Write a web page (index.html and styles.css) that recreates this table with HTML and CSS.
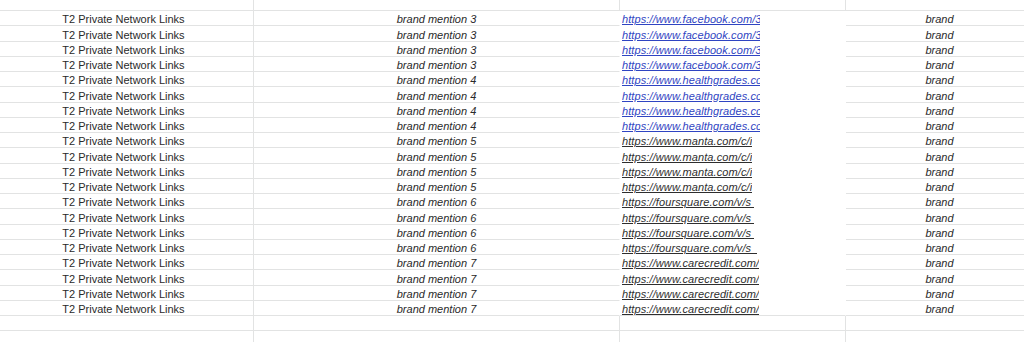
FILE: index.html
```html
<!DOCTYPE html>
<html>
<head>
<meta charset="utf-8">
<link rel="stylesheet" href="styles.css">
</head>
<body>
<div class="sheet">
  <div class="row top"><div class="c c1"></div><div class="c c2"></div><div class="c c3"></div><div class="c c4"></div></div>

  <div class="row data"><div class="c c1">T2 Private Network Links</div><div class="c c2">brand mention 3</div><div class="c c3"><span class="link blue">https://www.facebook.com/3</span></div><div class="c c4">brand</div></div>
  <div class="row data"><div class="c c1">T2 Private Network Links</div><div class="c c2">brand mention 3</div><div class="c c3"><span class="link blue">https://www.facebook.com/3</span></div><div class="c c4">brand</div></div>
  <div class="row data"><div class="c c1">T2 Private Network Links</div><div class="c c2">brand mention 3</div><div class="c c3"><span class="link blue">https://www.facebook.com/3</span></div><div class="c c4">brand</div></div>
  <div class="row data"><div class="c c1">T2 Private Network Links</div><div class="c c2">brand mention 3</div><div class="c c3"><span class="link blue">https://www.facebook.com/3</span></div><div class="c c4">brand</div></div>

  <div class="row data"><div class="c c1">T2 Private Network Links</div><div class="c c2">brand mention 4</div><div class="c c3"><span class="link blue">https://www.healthgrades.co</span></div><div class="c c4">brand</div></div>
  <div class="row data"><div class="c c1">T2 Private Network Links</div><div class="c c2">brand mention 4</div><div class="c c3"><span class="link blue">https://www.healthgrades.co</span></div><div class="c c4">brand</div></div>
  <div class="row data"><div class="c c1">T2 Private Network Links</div><div class="c c2">brand mention 4</div><div class="c c3"><span class="link blue">https://www.healthgrades.co</span></div><div class="c c4">brand</div></div>
  <div class="row data"><div class="c c1">T2 Private Network Links</div><div class="c c2">brand mention 4</div><div class="c c3"><span class="link blue">https://www.healthgrades.co</span></div><div class="c c4">brand</div></div>

  <div class="row data"><div class="c c1">T2 Private Network Links</div><div class="c c2">brand mention 5</div><div class="c c3"><span class="link">https://www.manta.com/c/i</span></div><div class="c c4">brand</div></div>
  <div class="row data"><div class="c c1">T2 Private Network Links</div><div class="c c2">brand mention 5</div><div class="c c3"><span class="link">https://www.manta.com/c/i</span></div><div class="c c4">brand</div></div>
  <div class="row data"><div class="c c1">T2 Private Network Links</div><div class="c c2">brand mention 5</div><div class="c c3"><span class="link">https://www.manta.com/c/i</span></div><div class="c c4">brand</div></div>
  <div class="row data"><div class="c c1">T2 Private Network Links</div><div class="c c2">brand mention 5</div><div class="c c3"><span class="link">https://www.manta.com/c/i</span></div><div class="c c4">brand</div></div>

  <div class="row data"><div class="c c1">T2 Private Network Links</div><div class="c c2">brand mention 6</div><div class="c c3"><span class="link">https://foursquare.com/v/s </span></div><div class="c c4">brand</div></div>
  <div class="row data"><div class="c c1">T2 Private Network Links</div><div class="c c2">brand mention 6</div><div class="c c3"><span class="link">https://foursquare.com/v/s </span></div><div class="c c4">brand</div></div>
  <div class="row data"><div class="c c1">T2 Private Network Links</div><div class="c c2">brand mention 6</div><div class="c c3"><span class="link">https://foursquare.com/v/s </span></div><div class="c c4">brand</div></div>
  <div class="row data"><div class="c c1">T2 Private Network Links</div><div class="c c2">brand mention 6</div><div class="c c3"><span class="link">https://foursquare.com/v/s  </span></div><div class="c c4">brand</div></div>

  <div class="row data"><div class="c c1">T2 Private Network Links</div><div class="c c2">brand mention 7</div><div class="c c3"><span class="link">https://www.carecredit.com/</span></div><div class="c c4">brand</div></div>
  <div class="row data"><div class="c c1">T2 Private Network Links</div><div class="c c2">brand mention 7</div><div class="c c3"><span class="link">https://www.carecredit.com/</span></div><div class="c c4">brand</div></div>
  <div class="row data"><div class="c c1">T2 Private Network Links</div><div class="c c2">brand mention 7</div><div class="c c3"><span class="link">https://www.carecredit.com/</span></div><div class="c c4">brand</div></div>
  <div class="row data last"><div class="c c1">T2 Private Network Links</div><div class="c c2">brand mention 7</div><div class="c c3"><span class="link">https://www.carecredit.com/</span></div><div class="c c4">brand</div></div>

  <div class="row"><div class="c c1"></div><div class="c c2"></div><div class="c c3"></div><div class="c c4"></div></div>
  <div class="row"><div class="c c1"></div><div class="c c2"></div><div class="c c3"></div><div class="c c4"></div></div>
</div>
</body>
</html>
```
FILE: styles.css
```css
html, body {
  margin: 0;
  padding: 0;
  background: #ffffff;
  overflow: hidden;
}

.sheet {
  display: flex;
  flex-direction: column;
  width: 1034px;
  font-family: "Liberation Sans", Arial, sans-serif;
  font-size: 11px;
  color: #2a2a2a;
}

.row {
  display: flex;
  height: 15.25px;
  flex: none;
}

.row.top {
  height: 11px;
}

.c {
  box-sizing: border-box;
  height: 100%;
  border-right: 1px solid #e2e3e3;
  border-bottom: 1px solid #e2e3e3;
  display: flex;
  align-items: flex-end;
  justify-content: center;
  white-space: nowrap;
  line-height: 11px;
  flex: none;
}

.c1 {
  width: 254px;
  padding-right: 6px;
}

.c2 {
  width: 366px;
  font-style: italic;
}

.c3 {
  width: 226px;
  justify-content: flex-start;
  padding-left: 2px;
}

.c4 {
  width: 188px;
  font-style: italic;
}

.data .c2 {
  border-right-color: #ffffff;
}

.data .c3 {
  border-right-color: #ffffff;
  border-bottom-color: #ffffff;
}

.data.last .c3 {
  border-bottom-color: #e2e3e3;
}

.link {
  display: block;
  max-width: 138px;
  overflow: hidden;
  white-space: pre;
  font-style: italic;
  text-decoration: underline;
  color: #2e2e2e;
  letter-spacing: 0.1px;
}

.link.blue {
  color: #2f44c2;
}
```
